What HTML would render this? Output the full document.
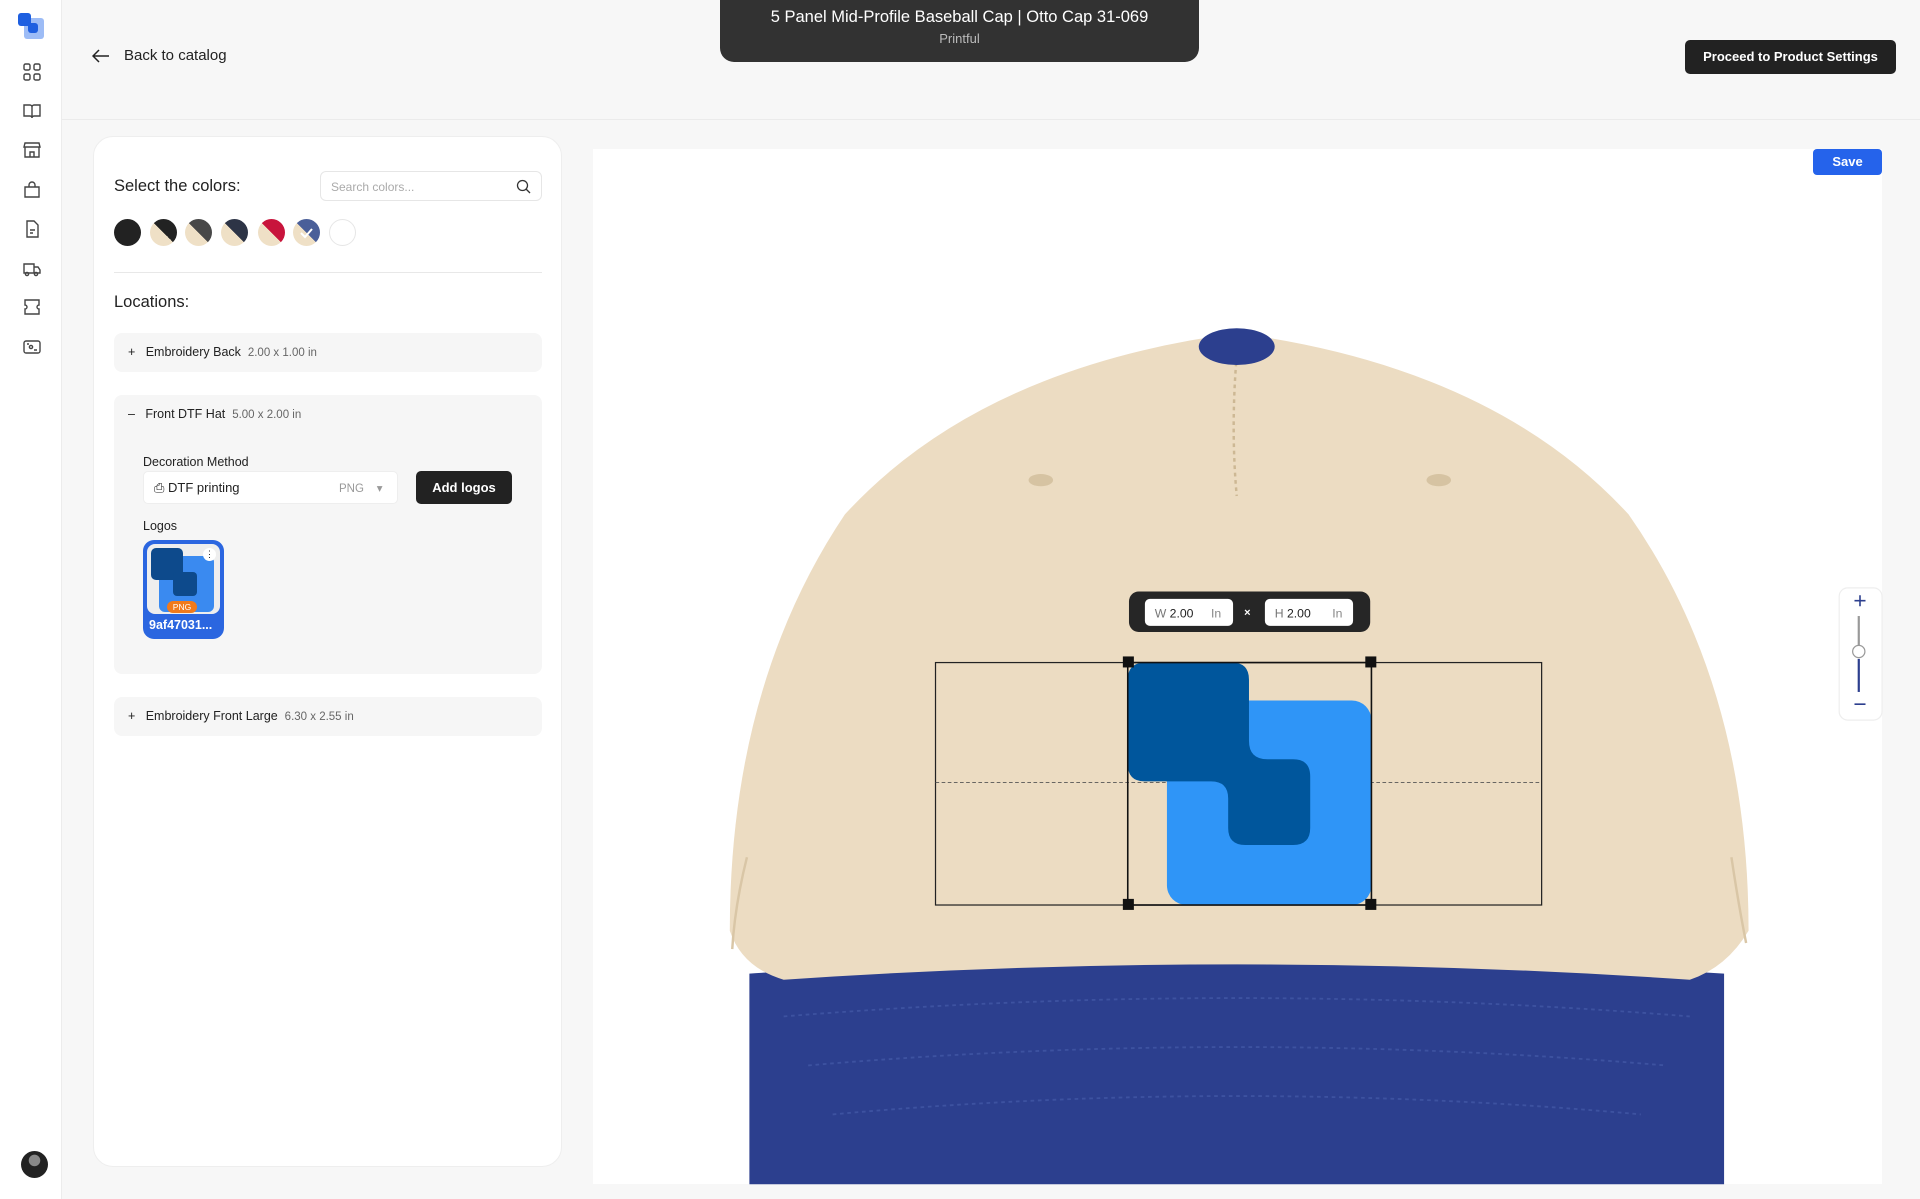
<!DOCTYPE html>
<html><head><meta charset="utf-8"><style>
*{box-sizing:border-box;margin:0;padding:0}
body{width:1920px;height:1199px;overflow:hidden;background:#f7f7f7;font-family:"Liberation Sans",sans-serif;color:#222;position:relative}
.abs{position:absolute}
.side{left:0;top:0;width:62px;height:1199px;background:#fff;border-right:1px solid #ececec}
.ic{position:absolute;left:22px;width:20px;height:20px}
.panel{left:93px;top:136px;width:469px;height:1031px;background:#fff;border-radius:20px;border:1px solid #eee}
.row{position:absolute;left:20px;width:428px;background:#f6f6f6;border-radius:8px;font-size:12.5px}
.sw{position:absolute;top:82px;width:27px;height:27px;border-radius:50%}
</style></head><body>
<div class="abs side">
<svg class="abs" style="left:16px;top:11px" width="30" height="30" viewBox="0 0 30 30"><rect x="8" y="7" width="20" height="21" rx="3" fill="#9dbcf6"/><rect x="2" y="2" width="13" height="13" rx="3" fill="#1e5fe0"/><rect x="12" y="12" width="10" height="10" rx="3" fill="#1e5fe0"/></svg>
<svg class="ic" style="top:62px" viewBox="0 0 20 20" fill="none" stroke="#444" stroke-width="1.4"><rect x="2" y="2" width="6" height="6" rx="1.5"/><rect x="12" y="2" width="6" height="6" rx="1.5"/><rect x="2" y="12" width="6" height="6" rx="1.5"/><rect x="12" y="12" width="6" height="6" rx="1.5"/></svg>
<svg class="ic" style="top:101px" viewBox="0 0 20 20" fill="none" stroke="#444" stroke-width="1.4"><path d="M2 4h6a2 2 0 0 1 2 2v11a2 2 0 0 0-2-2H2zM18 4h-6a2 2 0 0 0-2 2v11a2 2 0 0 1 2-2h6z"/></svg>
<svg class="ic" style="top:140px" viewBox="0 0 20 20" fill="none" stroke="#444" stroke-width="1.4"><path d="M3 3h14l1 4H2zM3 7v10h14V7M8 17v-5h4v5"/></svg>
<svg class="ic" style="top:180px" viewBox="0 0 20 20" fill="none" stroke="#444" stroke-width="1.4"><path d="M3 7h14v10H3zM7 7V5a3 3 0 0 1 6 0v2"/></svg>
<svg class="ic" style="top:219px" viewBox="0 0 20 20" fill="none" stroke="#444" stroke-width="1.4"><path d="M5 2h7l4 4v12H5zM8 11h5M8 14h3"/></svg>
<svg class="ic" style="top:259px" viewBox="0 0 20 20" fill="none" stroke="#444" stroke-width="1.4"><path d="M2 5h10v9H2zM12 8h4l2 3v3h-6"/><circle cx="5" cy="15" r="1.6"/><circle cx="14" cy="15" r="1.6"/></svg>
<svg class="ic" style="top:297px" viewBox="0 0 20 20" fill="none" stroke="#444" stroke-width="1.4"><path d="M3 3h14v5a2 2 0 0 0 0 4v5H3v-5a2 2 0 0 0 0-4z"/></svg>
<svg class="ic" style="top:337px" viewBox="0 0 20 20" fill="none" stroke="#444" stroke-width="1.4"><rect x="2" y="4" width="16" height="12" rx="2"/><circle cx="9" cy="10" r="1.6"/><path d="M5 7h2M12 13h3"/></svg>
<div class="abs" style="left:21px;top:1151px;width:27px;height:27px;border-radius:50%;background:radial-gradient(circle at 50% 35%,#888 0 25%,#222 27%)"></div>
</div>
<div class="abs" style="left:62px;top:119px;width:1858px;height:1px;background:#ebebeb"></div>
<svg class="abs" style="left:92px;top:49px" width="18" height="14" viewBox="0 0 18 14" fill="none" stroke="#222" stroke-width="1.5"><path d="M17 7H2M7 1L1 7l6 6"/></svg>
<div class="abs" style="left:124px;top:47px;font-size:15px">Back to catalog</div>
<div class="abs" style="left:720px;top:0;width:479px;height:62px;background:#323232;border-radius:0 0 14px 14px;color:#fff;text-align:center">
<div style="font-size:16.5px;margin-top:8px">5 Panel Mid-Profile Baseball Cap | Otto Cap 31-069</div>
<div style="font-size:13px;color:#bbb;margin-top:4px">Printful</div></div>
<div class="abs" style="left:1685px;top:40px;width:211px;height:34px;background:#222;border-radius:5px;color:#fff;font-size:13px;font-weight:bold;text-align:center;line-height:34px">Proceed to Product Settings</div>

<div class="abs panel">
<div class="abs" style="left:20px;top:40px;font-size:16.5px">Select the colors:</div>
<div class="abs" style="left:226px;top:34px;width:222px;height:30px;border:1px solid #e6e6e6;border-radius:6px;font-size:12px;color:#aaa;padding:8px 10px">Search colors...
<svg class="abs" style="right:10px;top:7px" width="15" height="15" viewBox="0 0 15 15" fill="none" stroke="#333" stroke-width="1.3"><circle cx="6.5" cy="6.5" r="5"/><path d="M10 10l4 4"/></svg></div>
<div class="sw" style="left:20px;background:#222"></div>
<div class="sw" style="left:56px;background:linear-gradient(45deg,#efe0c6 50%,#222 50%)"></div>
<div class="sw" style="left:91px;background:linear-gradient(45deg,#efe0c6 50%,#484848 50%)"></div>
<div class="sw" style="left:127px;background:linear-gradient(45deg,#efe0c6 50%,#2d3446 50%)"></div>
<div class="sw" style="left:164px;background:linear-gradient(45deg,#efe0c6 50%,#c8143c 50%)"></div>
<div class="sw" style="left:199px;background:linear-gradient(45deg,#efe0c6 50%,#4a5f99 50%)"><svg width="27" height="27"><path d="M8 14l4 4 7-8" stroke="#fff" stroke-width="2" fill="none"/></svg></div>
<div class="sw" style="left:235px;border:1px solid #e6e6e6;background:#fff"></div>
<div class="abs" style="left:20px;top:135px;width:428px;height:1px;background:#e8e8e8"></div>
<div class="abs" style="left:20px;top:156px;font-size:16.5px">Locations:</div>
<div class="row" style="top:196px;height:39px;line-height:39px;padding-left:14px">+&nbsp;&nbsp;&nbsp;Embroidery Back&nbsp;&nbsp;<span style="color:#666;font-size:11.5px">2.00 x 1.00 in</span></div>
<div class="row" style="top:258px;height:279px">
<div class="abs" style="left:14px;top:12px">–&nbsp;&nbsp;&nbsp;Front DTF Hat&nbsp;&nbsp;<span style="color:#666;font-size:11.5px">5.00 x 2.00 in</span></div>
<div class="abs" style="left:29px;top:60px;font-size:12.5px">Decoration Method</div>
<div class="abs" style="left:29px;top:76px;width:255px;height:33px;background:#fff;border:1px solid #eee;border-radius:5px;padding:8px 10px">
<span style="font-size:13px">⎙ DTF printing</span><span class="abs" style="left:195px;top:9px;color:#999;font-size:11.5px">PNG &nbsp;&nbsp;&nbsp;▾</span></div>
<div class="abs" style="left:302px;top:76px;width:96px;height:33px;background:#222;border-radius:5px;color:#fff;font-size:13px;font-weight:bold;text-align:center;line-height:33px">Add logos</div>
<div class="abs" style="left:29px;top:124px">Logos</div>
<div class="abs" style="left:29px;top:145px;width:81px;height:99px;background:#2b66e0;border-radius:11px">
<div class="abs" style="left:4px;top:4px;width:73px;height:70px;background:#eee;border-radius:8px;overflow:hidden">
<div class="abs" style="left:12px;top:12px;width:55px;height:56px;background:#3a8af0;border-radius:6px"></div>
<div class="abs" style="left:4px;top:4px;width:32px;height:32px;background:#0d4a8c;border-radius:5px"></div>
<div class="abs" style="left:26px;top:28px;width:24px;height:24px;background:#0d4a8c;border-radius:4px"></div>
<div class="abs" style="left:20px;top:57px;width:30px;height:12px;background:#f07a1c;border-radius:6px;color:#fff;font-size:8.5px;text-align:center;line-height:12px">PNG</div>
<div class="abs" style="left:56px;top:4px;width:13px;height:13px;background:#fff;border-radius:50%;font-size:9px;text-align:center;line-height:12px">⋮</div></div>
<div class="abs" style="left:6px;top:78px;color:#fff;font-size:12.5px;font-weight:bold">9af47031...</div></div>
</div>
<div class="row" style="top:560px;height:39px;line-height:39px;padding-left:14px">+&nbsp;&nbsp;&nbsp;Embroidery Front Large&nbsp;&nbsp;<span style="color:#666;font-size:11.5px">6.30 x 2.55 in</span></div>
</div>

<div class="abs" style="left:593px;top:149px;width:1289px;height:1035px;background:#fff"></div>
<svg class="abs" style="left:0;top:0" width="1920" height="1199" viewBox="0 0 1568 979">
<path d="M612 795 L612 967 L1408 967 L1408 795 Q1010 770 612 795Z" fill="#2c3f8e"/>
<path d="M640 830 Q1010 800 1380 830 M660 870 Q1010 840 1360 870 M680 910 Q1010 880 1340 910" stroke="#3d52a0" stroke-width="1.5" stroke-dasharray="3 3" fill="none"/>
<path d="M596 760 Q596 560 690 420 Q800 300 1010 272 Q1220 300 1330 420 Q1428 560 1428 760 Q1410 790 1380 800 Q1010 775 640 800 Q606 790 596 760Z" fill="#ecdcc2"/>
<path d="M598 775 Q600 740 610 700 M1426 770 Q1420 740 1414 700" stroke="#d9c6a6" stroke-width="2" fill="none"/>
<path d="M1010 290 Q1005 350 1010 405" stroke="#cdb894" stroke-width="2" fill="none" stroke-dasharray="3 3"/>
<ellipse cx="850" cy="392" rx="10" ry="5" fill="#d6c3a2"/><ellipse cx="1175" cy="392" rx="10" ry="5" fill="#d6c3a2"/>
<ellipse cx="1010" cy="283" rx="31" ry="15" fill="#2c3f8e"/>
<rect x="764" y="541" width="495" height="198" fill="none" stroke="#222" stroke-width="1"/>
<line x1="764" y1="639" x2="1259" y2="639" stroke="#555" stroke-dasharray="3 2" stroke-width="0.8"/>
<rect x="953" y="572" width="167" height="167" rx="16" fill="#2f95f7"/>
<path d="M935 541 H1006 Q1020 541 1020 555 V605 Q1020 620 1035 620 H1056 Q1070 620 1070 634 V676 Q1070 690 1056 690 H1017 Q1003 690 1003 676 V652 Q1003 638 989 638 H935 Q921 638 921 624 V555 Q921 541 935 541Z" fill="#00569c"/>
<rect x="921" y="541" width="199" height="198" fill="none" stroke="#111" stroke-width="1.3"/>
<rect x="917" y="536" width="9" height="9" fill="#111"/><rect x="1115" y="536" width="9" height="9" fill="#111"/><rect x="917" y="734" width="9" height="9" fill="#111"/><rect x="1115" y="734" width="9" height="9" fill="#111"/>
<rect x="922" y="483" width="197" height="33" rx="8" fill="#262626"/>
<rect x="935" y="489" width="72" height="22" rx="4" fill="#fff"/><rect x="1033" y="489" width="72" height="22" rx="4" fill="#fff"/>
<text x="943" y="504" font-size="10" font-family="Liberation Sans" fill="#777">W <tspan fill="#222">2.00</tspan></text><text x="989" y="504" font-size="10" font-family="Liberation Sans" fill="#888">In</text>
<text x="1041" y="504" font-size="10" font-family="Liberation Sans" fill="#777">H <tspan fill="#222">2.00</tspan></text><text x="1088" y="504" font-size="10" font-family="Liberation Sans" fill="#888">In</text>
<text x="1016" y="503" font-size="9" font-family="Liberation Sans" font-weight="bold" fill="#fff">×</text>
<rect x="1537" y="122" width="31" height="845" fill="#f7f7f7"/>
<rect x="1502" y="480" width="35" height="108" rx="7" fill="#fff" stroke="#eee"/>
<path d="M1519 486v9M1514.5 490.5h9M1514.5 575h9" stroke="#2c3f8e" stroke-width="1.3"/>
<line x1="1518" y1="503" x2="1518" y2="532" stroke="#999" stroke-width="1.8"/>
<line x1="1518" y1="538" x2="1518" y2="565" stroke="#2c3f8e" stroke-width="1.8"/>
<circle cx="1518" cy="532" r="5" fill="#fff" stroke="#999"/>
</svg>
<div class="abs" style="left:1813px;top:149px;width:69px;height:26px;background:#2563eb;border-radius:4px;color:#fff;font-size:13px;font-weight:bold;text-align:center;line-height:26px">Save</div>
</body></html>
